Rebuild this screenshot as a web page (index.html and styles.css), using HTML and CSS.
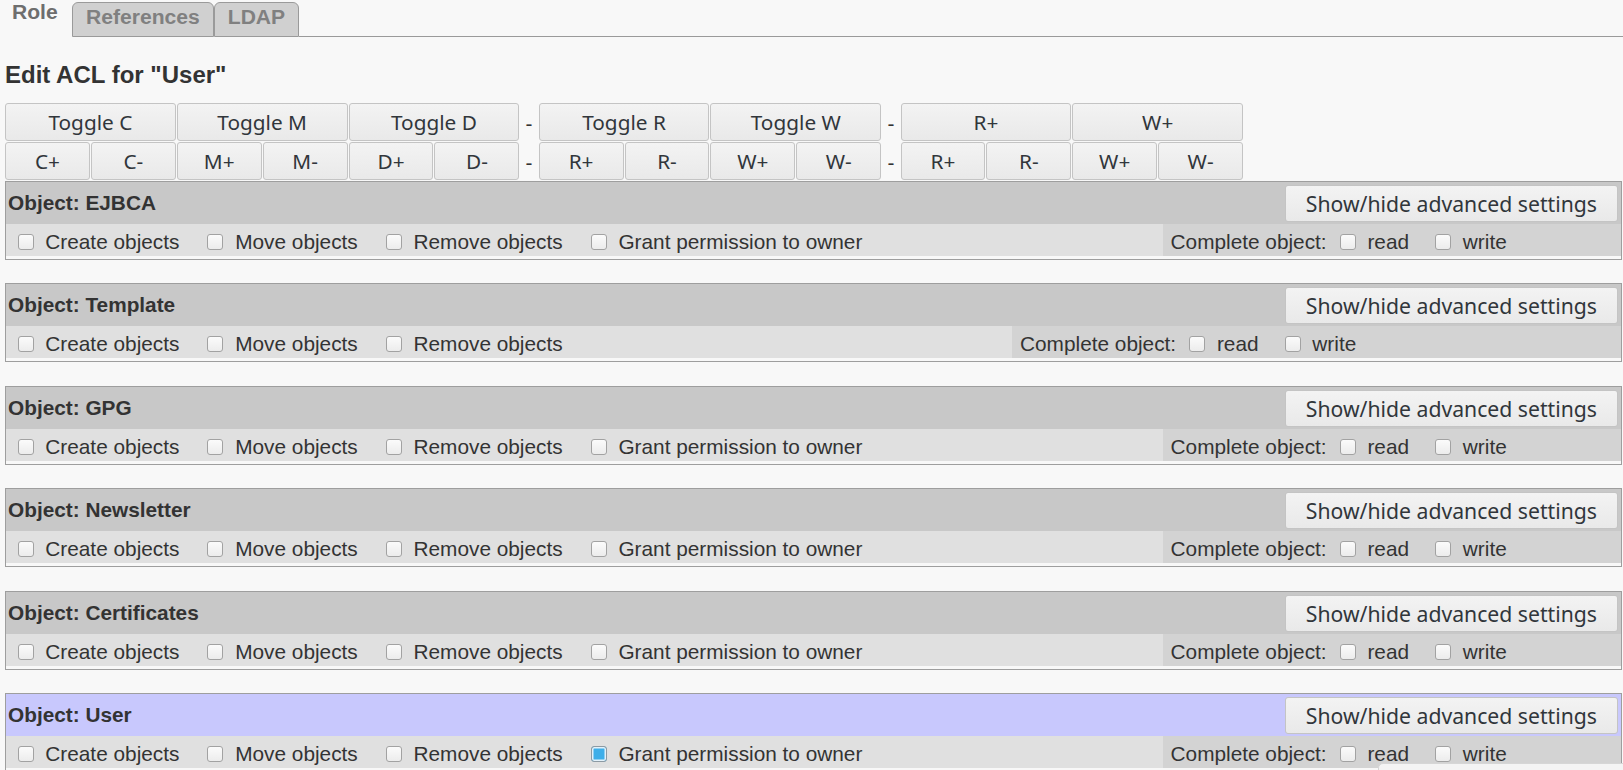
FILE: index.html
```html
<!DOCTYPE html>
<html>
<head>
<meta charset="utf-8">
<title>Edit ACL</title>
<link rel="stylesheet" href="styles.css">
</head>
<body>
<div class="tabs">
  <div class="tab active">Role</div>
  <div class="tab">References</div>
  <div class="tab">LDAP</div>
  <div class="tab-fill"></div>
</div>
<div class="content">
  <h2 class="title">Edit ACL for "User"</h2>
  <div class="toggles">
    <div class="group g6">
      <button class="btn wide">Toggle C</button>
      <button class="btn wide">Toggle M</button>
      <button class="btn wide">Toggle D</button>
      <button class="btn">C+</button>
      <button class="btn">C-</button>
      <button class="btn">M+</button>
      <button class="btn">M-</button>
      <button class="btn">D+</button>
      <button class="btn">D-</button>
    </div>
    <div class="sep"><span>-</span><span>-</span></div>
    <div class="group g4">
      <button class="btn wide">Toggle R</button>
      <button class="btn wide">Toggle W</button>
      <button class="btn">R+</button>
      <button class="btn">R-</button>
      <button class="btn">W+</button>
      <button class="btn">W-</button>
    </div>
    <div class="sep"><span>-</span><span>-</span></div>
    <div class="group g4">
      <button class="btn wide">R+</button>
      <button class="btn wide">W+</button>
      <button class="btn">R+</button>
      <button class="btn">R-</button>
      <button class="btn">W+</button>
      <button class="btn">W-</button>
    </div>
  </div>

  <section class="obj">
    <div class="obj-head"><span class="obj-name">Object: EJBCA</span><button class="btn adv">Show/hide advanced settings</button></div>
    <table class="perms"><tr>
      <td class="perm-left"><div class="items">
        <label class="item"><input type="checkbox" class="cb">Create objects</label>
        <label class="item"><input type="checkbox" class="cb">Move objects</label>
        <label class="item"><input type="checkbox" class="cb">Remove objects</label>
        <label class="item"><input type="checkbox" class="cb">Grant permission to owner</label>
      </div></td>
      <td class="perm-right"><div class="complete">
        <span class="complete-label">Complete object:</span>
        <label class="item"><input type="checkbox" class="cb">read</label>
        <label class="item"><input type="checkbox" class="cb">write</label>
      </div></td>
    </tr></table>
  </section>

  <section class="obj">
    <div class="obj-head"><span class="obj-name">Object: Template</span><button class="btn adv">Show/hide advanced settings</button></div>
    <table class="perms"><tr>
      <td class="perm-left"><div class="items">
        <label class="item"><input type="checkbox" class="cb">Create objects</label>
        <label class="item"><input type="checkbox" class="cb">Move objects</label>
        <label class="item"><input type="checkbox" class="cb">Remove objects</label>
      </div></td>
      <td class="perm-right"><div class="complete">
        <span class="complete-label">Complete object:</span>
        <label class="item"><input type="checkbox" class="cb">read</label>
        <label class="item"><input type="checkbox" class="cb">write</label>
      </div></td>
    </tr></table>
  </section>

  <section class="obj">
    <div class="obj-head"><span class="obj-name">Object: GPG</span><button class="btn adv">Show/hide advanced settings</button></div>
    <table class="perms"><tr>
      <td class="perm-left"><div class="items">
        <label class="item"><input type="checkbox" class="cb">Create objects</label>
        <label class="item"><input type="checkbox" class="cb">Move objects</label>
        <label class="item"><input type="checkbox" class="cb">Remove objects</label>
        <label class="item"><input type="checkbox" class="cb">Grant permission to owner</label>
      </div></td>
      <td class="perm-right"><div class="complete">
        <span class="complete-label">Complete object:</span>
        <label class="item"><input type="checkbox" class="cb">read</label>
        <label class="item"><input type="checkbox" class="cb">write</label>
      </div></td>
    </tr></table>
  </section>

  <section class="obj">
    <div class="obj-head"><span class="obj-name">Object: Newsletter</span><button class="btn adv">Show/hide advanced settings</button></div>
    <table class="perms"><tr>
      <td class="perm-left"><div class="items">
        <label class="item"><input type="checkbox" class="cb">Create objects</label>
        <label class="item"><input type="checkbox" class="cb">Move objects</label>
        <label class="item"><input type="checkbox" class="cb">Remove objects</label>
        <label class="item"><input type="checkbox" class="cb">Grant permission to owner</label>
      </div></td>
      <td class="perm-right"><div class="complete">
        <span class="complete-label">Complete object:</span>
        <label class="item"><input type="checkbox" class="cb">read</label>
        <label class="item"><input type="checkbox" class="cb">write</label>
      </div></td>
    </tr></table>
  </section>

  <section class="obj">
    <div class="obj-head"><span class="obj-name">Object: Certificates</span><button class="btn adv">Show/hide advanced settings</button></div>
    <table class="perms"><tr>
      <td class="perm-left"><div class="items">
        <label class="item"><input type="checkbox" class="cb">Create objects</label>
        <label class="item"><input type="checkbox" class="cb">Move objects</label>
        <label class="item"><input type="checkbox" class="cb">Remove objects</label>
        <label class="item"><input type="checkbox" class="cb">Grant permission to owner</label>
      </div></td>
      <td class="perm-right"><div class="complete">
        <span class="complete-label">Complete object:</span>
        <label class="item"><input type="checkbox" class="cb">read</label>
        <label class="item"><input type="checkbox" class="cb">write</label>
      </div></td>
    </tr></table>
  </section>

  <section class="obj">
    <div class="obj-head current"><span class="obj-name">Object: User</span><button class="btn adv">Show/hide advanced settings</button></div>
    <table class="perms"><tr>
      <td class="perm-left"><div class="items">
        <label class="item"><input type="checkbox" class="cb">Create objects</label>
        <label class="item"><input type="checkbox" class="cb">Move objects</label>
        <label class="item"><input type="checkbox" class="cb">Remove objects</label>
        <label class="item"><input type="checkbox" class="cb" checked>Grant permission to owner</label>
      </div></td>
      <td class="perm-right"><div class="complete">
        <span class="complete-label">Complete object:</span>
        <label class="item"><input type="checkbox" class="cb">read</label>
        <label class="item"><input type="checkbox" class="cb">write</label>
      </div></td>
    </tr></table>
  </section>
</div>
<div class="popup"></div>
</body>
</html>
```

FILE: styles.css
```css
html {
  overflow: hidden;
}
body {
  margin: 0;
  background: #f8f8f8;
  color: #333;
  font-family: "Liberation Sans", Arial, sans-serif;
  font-size: 20.8px;
}

/* tabs */
.tabs {
  display: flex;
  align-items: flex-end;
  height: 37px;
}
.tab {
  box-sizing: border-box;
  height: 35px;
  padding: 1.5px 13px 0;
  line-height: 24px;
  font-size: 21.1px;
  font-weight: bold;
  color: #808080;
  background: #d0d0d0;
  border: 1px solid #9a9a9a;
  border-radius: 6px 6px 0 0;
}
.tab.active {
  align-self: flex-start;
  width: 72px;
  height: 37px;
  padding: 0 0 0 12px;
  background: transparent;
  border: none;
  color: #6e6e6e;
  line-height: 24px;
}
.tab-fill {
  flex: 1;
  box-sizing: border-box;
  align-self: stretch;
  border-bottom: 1px solid #9a9a9a;
}

.content {
  padding: 0 1px 0 5px;
}
.title {
  margin: 24.3px 0 14.7px 0;
  font-size: 24px;
  line-height: 27px;
  font-weight: bold;
  color: #333;
}

/* toggle buttons */
.toggles {
  display: flex;
  margin-bottom: 1px;
}
.group {
  display: grid;
  grid-auto-rows: 38px;
  gap: 1px;
}
.g6 {
  grid-template-columns: repeat(6, 84.9px);
}
.g4 {
  grid-template-columns: repeat(4, 84.9px);
}
.btn {
  margin: 0;
  padding: 0;
  font-family: "Noto Sans", "Open Sans", sans-serif;
  font-size: 20.8px;
  color: #31363b;
  background: linear-gradient(#f3f3f3, #e9e9e9);
  border: 1px solid #c4c4c4;
  border-radius: 3px;
}
.wide {
  grid-column: span 2;
}
.sep {
  display: grid;
  grid-auto-rows: 38px;
  row-gap: 1px;
  width: 19.3px;
  text-align: center;
}
.sep span {
  box-sizing: border-box;
  padding-top: 4px;
  line-height: 34px;
}

/* object sections */
.obj {
  border: 1px solid #9e9e9e;
  padding-bottom: 3px;
  margin-bottom: 23.4px;
}
.obj-head {
  display: flex;
  align-items: center;
  justify-content: space-between;
  height: 42px;
  padding-left: 2px;
  background: #c8c8c8;
}
.obj-head.current {
  background: #c8c8fd;
}
.obj-name {
  font-weight: bold;
}
.adv {
  height: 37px;
  padding: 0 20px;
  margin-right: 3px;
  margin-top: 1px;
  font-size: 21.2px;
}

.perms {
  width: 100%;
  border-collapse: collapse;
  border-spacing: 0;
}
.perms td {
  height: 32px;
  padding: 0;
  vertical-align: middle;
}
.perm-left {
  background: #e0e0e0;
  padding: 0 12px 0 11.5px !important;
}
.perm-right {
  background: #d3d3d3;
  padding: 0 0 0 8px !important;
}
.items {
  display: flex;
  align-items: center;
  gap: 28px;
  padding-top: 4px;
  white-space: nowrap;
}
.complete {
  display: flex;
  align-items: center;
  padding-top: 4px;
  white-space: nowrap;
}
.complete-label {
  margin-right: 13px;
}
.complete .item + .item {
  margin-left: 26px;
}
.item {
  display: flex;
  align-items: center;
  gap: 11.8px;
}
.cb {
  -webkit-appearance: none;
  appearance: none;
  box-sizing: border-box;
  width: 16px;
  height: 16px;
  margin: 0;
  border: 1px solid #a2a2a2;
  border-radius: 3px;
  background: linear-gradient(#fbfbfb, #ececec);
}
.cb:checked {
  border-color: #8d9aa3;
  background: #3daee9;
  box-shadow: inset 0 0 0 1.5px #e3f1fa;
}

.popup {
  position: absolute;
  left: 1378px;
  top: 763px;
  width: 260px;
  height: 24px;
  background: #f4f4f4;
  border: 1px solid #d6d6d6;
  border-radius: 5px 0 0 0;
}
```
